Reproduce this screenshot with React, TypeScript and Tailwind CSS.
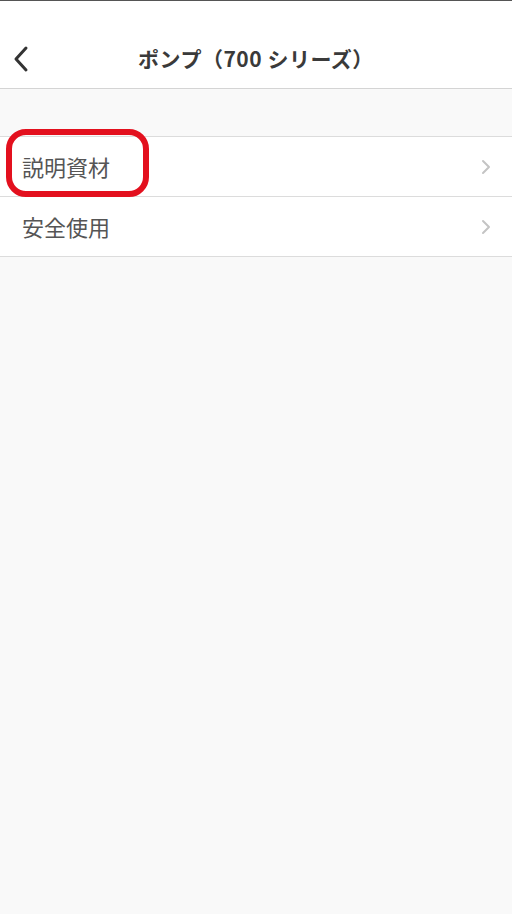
import React from 'react';

const font = { fontFamily: '"Noto Sans CJK JP", "Noto Sans", sans-serif' };

const ChevronRight = () => (
  <svg width="12" height="18" viewBox="0 0 12 18" fill="none">
    <path d="M3 3l6 6-6 6" stroke="#c4c4c4" strokeWidth="2" strokeLinecap="round" strokeLinejoin="round" />
  </svg>
);

const items = ['説明資材', '安全使用'];

export default function App() {
  return (
    <div className="w-[512px] h-[914px] bg-[#f9f9f9] flex flex-col" style={font}>
      <div className="h-[1px] bg-[#555]" />
      <header className="relative h-[88px] bg-white border-b border-[#d4d4d4] flex items-center justify-center pt-[28px]">
        <button className="absolute left-[10px] top-[44px]">
          <svg width="22" height="28" viewBox="0 0 22 28" fill="none">
            <path d="M16 3L6 14l10 11" stroke="#333" strokeWidth="3" strokeLinecap="round" strokeLinejoin="round" />
          </svg>
        </button>
        <h1 className="text-[21px] font-bold text-[#3a3a3a] tracking-[0.5px]">ポンプ（700 シリーズ）</h1>
      </header>
      <div className="h-[47px]" />
      <ul className="bg-white border-t border-[#dcdcdc]">
        {items.map((label, i) => (
          <li key={i} className="relative h-[60px] border-b border-[#dcdcdc] flex items-center justify-between pl-[22px] pr-[20px]">
            <span className="text-[22px] text-[#555]">{label}</span>
            <ChevronRight />
            {i === 0 && (
              <div className="absolute left-[6px] top-[-8px] w-[143px] h-[68px] border-[6px] border-[#e3101e] rounded-[20px]" />
            )}
          </li>
        ))}
      </ul>
    </div>
  );
}
